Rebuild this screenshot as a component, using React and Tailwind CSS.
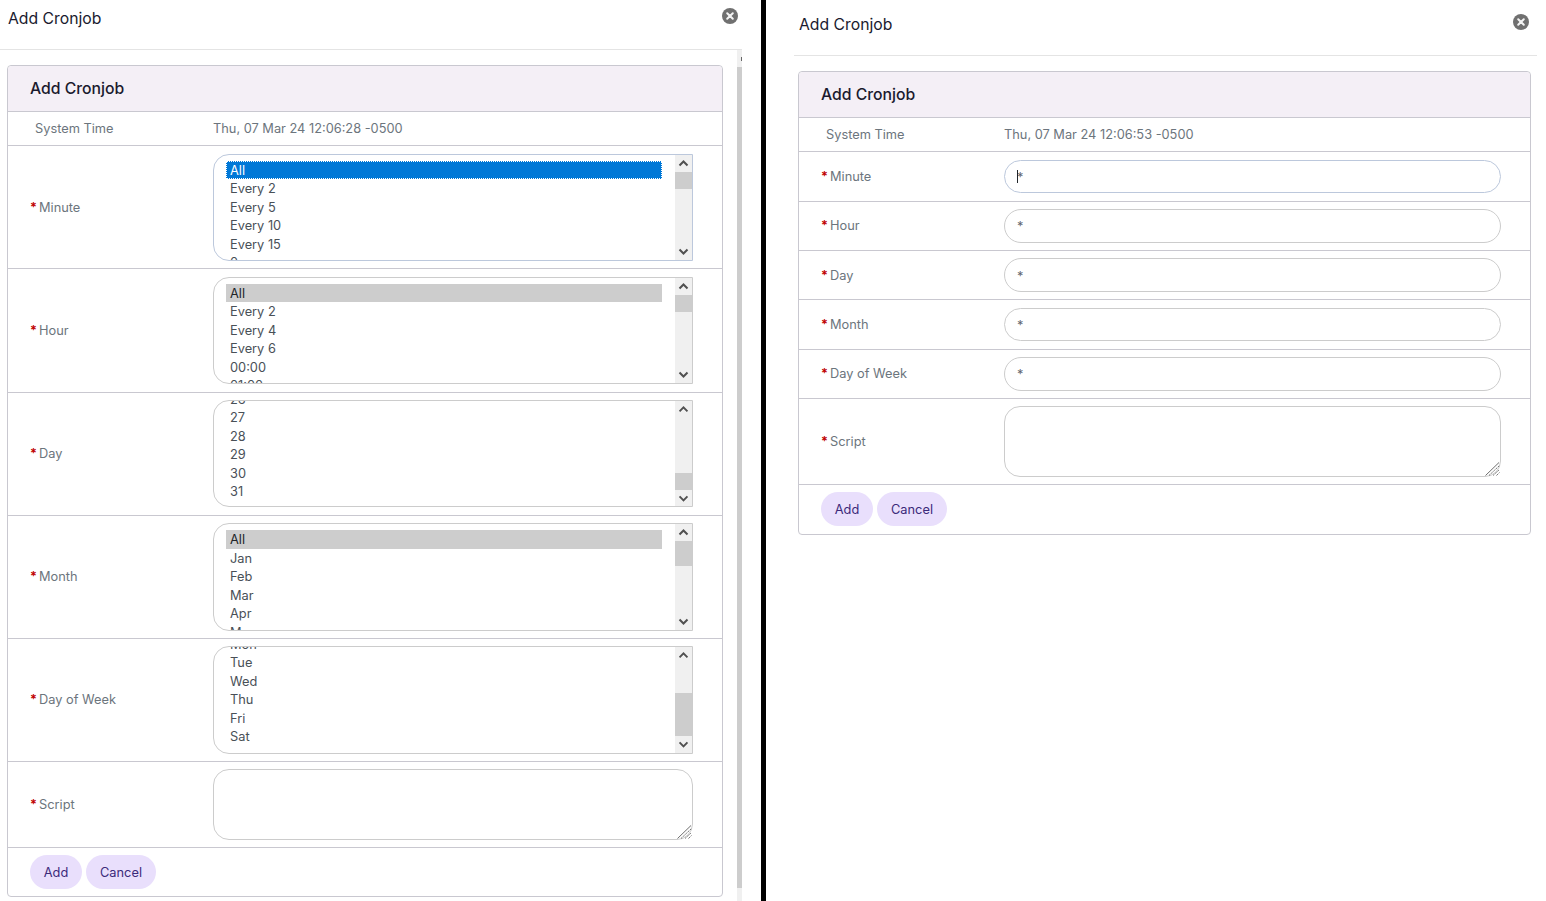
const minuteOptions = ["All", "Every 2", "Every 5", "Every 10", "Every 15", "0"];
const hourOptions = ["All", "Every 2", "Every 4", "Every 6", "00:00", "01:00"];
const dayOptions = ["26", "27", "28", "29", "30", "31"];
const monthOptions = ["All", "Jan", "Feb", "Mar", "Apr", "May"];
const weekOptions = ["Mon", "Tue", "Wed", "Thu", "Fri", "Sat"];

function CloseIcon() {
  return (
    <svg width="16" height="16" viewBox="0 0 16 16">
      <circle cx="8" cy="8" r="8" fill="#707070" />
      <path d="M5.2 5.2l5.6 5.6M10.8 5.2l-5.6 5.6" stroke="#f4f4f4" strokeWidth="2" strokeLinecap="round" />
    </svg>
  );
}

function Chevron({ up }) {
  return (
    <svg width="17" height="17" viewBox="0 0 17 17" fill="none" stroke="#505050" strokeWidth="2">
      <polyline points={up ? "4.5,10.5 8.5,6.5 12.5,10.5" : "4.5,6.5 8.5,10.5 12.5,6.5"} />
    </svg>
  );
}

function ResizeHandle() {
  return (
    <svg
      className="absolute bottom-[1px] right-[1px]"
      width="15"
      height="14"
      viewBox="0 0 15 14"
      fill="none"
      stroke="#6e6e6e"
      strokeWidth="1"
    >
      <path d="M0.5 13.5L14 0.5" />
      <path d="M4 13.5L14.5 3.5" strokeDasharray="2 1" />
      <path d="M8 13.5L14.5 7.5" strokeDasharray="2 1" />
      <path d="M11.5 13.5L14.5 10.5" strokeDasharray="2 1" />
    </svg>
  );
}

function Label({ children }) {
  return (
    <div className="flex w-[205px] shrink-0 items-center pl-[22px] text-[12.8px] text-[#6c757d]">
      <span className="w-[9px] font-semibold text-[#c00000]">*</span>
      <span>{children}</span>
    </div>
  );
}

function ListBox({ options, selected, focused, scrollClass, thumbClass, borderClass }) {
  return (
    <div className={`flex h-[107.5px] flex-1 overflow-hidden rounded-l-[16px] border bg-white ${borderClass}`}>
      <div className="flex-1 overflow-hidden pl-[12px] pr-[13px]">
        <div className={scrollClass}>
          {options.map((opt) => {
            const isSel = opt === selected;
            let cls = "text-[#495057]";
            if (isSel && focused) cls = "bg-[#0078d7] text-white outline-1 outline-dotted -outline-offset-1 outline-white";
            else if (isSel) cls = "bg-[#cdcdcd] text-[#212529]";
            return (
              <div key={opt} className={`h-[18.5px] pl-[4px] text-[12.8px] leading-[20px] ${cls}`}>
                {opt}
              </div>
            );
          })}
        </div>
      </div>
      <div className="flex w-[17px] shrink-0 flex-col bg-[#f0f0f0]">
        <Chevron up />
        <div className="flex-1">
          <div className={`bg-[#cdcdcd] ${thumbClass}`} />
        </div>
        <Chevron />
      </div>
    </div>
  );
}

function Row({ label, heightClass, children }) {
  return (
    <div className={`flex items-center border-t border-[#c9c8d0] ${heightClass}`}>
      <Label>{label}</Label>
      <div className="flex flex-1 pr-[29px]">{children}</div>
    </div>
  );
}

function ScriptBox() {
  return (
    <div className="relative flex-1">
      <textarea
        readOnly
        className="block h-[71px] w-full resize-none rounded-[16px] border border-[#ccc] bg-white px-[13px] py-[6px] text-[12.8px] outline-none"
      />
      <ResizeHandle />
    </div>
  );
}

function Card({ time, footerClass, children }) {
  return (
    <div className="rounded-[4px] border border-[#c9c8d0]">
      <div className="flex h-[45px] items-center rounded-t-[4px] bg-[#f4eff6] pl-[22px] text-[15.75px] font-medium text-[#1a1a2e]">
        Add Cronjob
      </div>
      <div className="flex h-[34.2px] items-center border-t border-[#c9c8d0] text-[12.8px] text-[#6c757d]">
        <div className="w-[205px] shrink-0 pl-[27px]">System Time</div>
        <div>{time}</div>
      </div>
      {children}
      <div className={`flex items-start gap-[4px] border-t border-[#c9c8d0] pl-[22px] pt-[7px] ${footerClass}`}>
        <button className="h-[34px] w-[52px] rounded-full bg-[#e9dffc] text-[12.8px] text-[#3b2a7a]">Add</button>
        <button className="h-[34px] w-[70px] rounded-full bg-[#e9dffc] text-[12.8px] text-[#3b2a7a]">Cancel</button>
      </div>
    </div>
  );
}

function TextRow({ label, focused }) {
  return (
    <Row label={label} heightClass="h-[49.4px]">
      <div className="relative flex-1">
        <input
          readOnly
          value="*"
          className={`block h-[33.7px] w-full rounded-full border bg-white px-[12px] pt-[2px] text-[12.8px] text-[#5f6670] outline-none ${
            focused ? "border-[#bcc8dc]" : "border-[#ccc]"
          }`}
        />
        {focused && <span className="absolute left-[13px] top-[10px] h-[13px] w-px bg-[#212529]" />}
      </div>
    </Row>
  );
}

export default function App() {
  return (
    <div className="flex h-[901px] overflow-hidden bg-white font-['Inter',sans-serif]">
      {/* Left: list box version */}
      <div className="w-[761px] shrink-0">
        <div className="flex h-[50px] w-[742px] items-start justify-between border-b border-[#e4e4e4] pl-[8px] pr-[4px]">
          <div className="pt-[8px] text-[15.75px] leading-[22px] text-[#1a1a2e]">Add Cronjob</div>
          <div className="pt-[8px]">
            <CloseIcon />
          </div>
        </div>
        <div className="flex w-[742px]">
          <div className="w-[737px] shrink-0 pl-[7px] pr-[14px] pt-[15px]">
            <Card time="Thu, 07 Mar 24 12:06:28 -0500" footerClass="h-[49px]">
              <Row label="Minute" heightClass="h-[123.2px]">
                <ListBox
                  options={minuteOptions}
                  selected="All"
                  focused
                  scrollClass="pt-[6px]"
                  thumbClass="h-[17px]"
                  borderClass="border-[#bcc8dc]"
                />
              </Row>
              <Row label="Hour" heightClass="h-[123.2px]">
                <ListBox
                  options={hourOptions}
                  selected="All"
                  scrollClass="pt-[6px]"
                  thumbClass="h-[17px]"
                  borderClass="border-[#ccc]"
                />
              </Row>
              <Row label="Day" heightClass="h-[123.2px]">
                <ListBox
                  options={dayOptions}
                  scrollClass="-mt-[11.3px]"
                  thumbClass="mt-[55px] h-[17px]"
                  borderClass="border-[#ccc]"
                />
              </Row>
              <Row label="Month" heightClass="h-[123.2px]">
                <ListBox
                  options={monthOptions}
                  selected="All"
                  scrollClass="pt-[6px]"
                  thumbClass="h-[25px]"
                  borderClass="border-[#ccc]"
                />
              </Row>
              <Row label="Day of Week" heightClass="h-[123.2px]">
                <ListBox
                  options={weekOptions}
                  scrollClass="-mt-[12.5px]"
                  thumbClass="mt-[29px] h-[43px]"
                  borderClass="border-[#ccc]"
                />
              </Row>
              <Row label="Script" heightClass="h-[86px]">
                <ScriptBox />
              </Row>
            </Card>
          </div>
          <div className="flex h-[851px] w-[5px] shrink-0 flex-col bg-[#f0f0f0]">
            <div className="flex h-[17px] items-center justify-end">
              <div className="h-[4px] w-px bg-[#666]" />
            </div>
            <div className="h-[821px] bg-[#cdcdcd]" />
          </div>
        </div>
      </div>

      <div className="w-[5px] shrink-0 bg-black" />

      {/* Right: text input version */}
      <div className="flex-1 pl-[28px] pr-[9px]">
        <div className="flex h-[56px] items-start justify-between border-b border-[#e4e4e4] pl-[5px] pr-[8px]">
          <div className="pt-[14px] text-[15.75px] leading-[22px] text-[#1a1a2e]">Add Cronjob</div>
          <div className="pt-[14px]">
            <CloseIcon />
          </div>
        </div>
        <div className="pl-[4px] pr-[6px] pt-[15px]">
          <Card time="Thu, 07 Mar 24 12:06:53 -0500" footerClass="h-[49.5px]">
            <TextRow label="Minute" focused />
            <TextRow label="Hour" />
            <TextRow label="Day" />
            <TextRow label="Month" />
            <TextRow label="Day of Week" />
            <Row label="Script" heightClass="h-[86px]">
              <ScriptBox />
            </Row>
          </Card>
        </div>
      </div>
    </div>
  );
}
